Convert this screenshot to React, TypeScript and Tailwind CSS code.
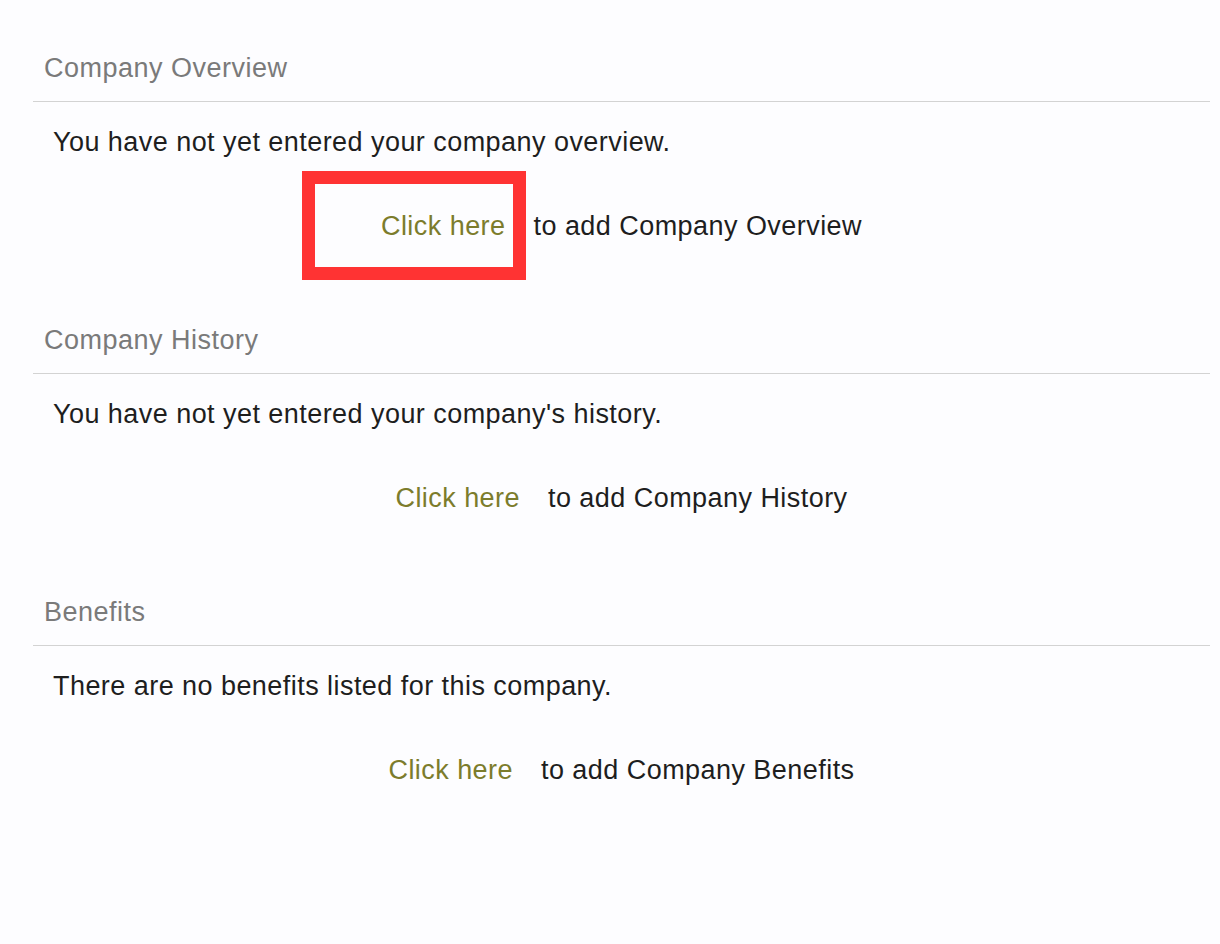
import React from "react";

function Section({
  title,
  message,
  what,
  highlight,
}: {
  title: string;
  message: string;
  what: string;
  highlight?: boolean;
}) {
  return (
    <section className="flex flex-col">
      <h2 className="border-b border-[#d3d3d3] pb-[15px] pl-[11px] text-[27px] leading-[36px] font-normal text-[#7a7a7a] tracking-[0.5px]">
        {title}
      </h2>
      <p className="mt-[22px] pl-[20px] text-[27px] leading-[36px] text-[#1e1e1e] tracking-[0.45px]">
        {message}
      </p>
      <div className="mt-[48px] flex justify-center text-[27px] leading-[36px] tracking-[0.45px]">
        <span className="relative mr-[28px] text-[#7c7c2c]">
          Click here
          {highlight && (
            <span className="pointer-events-none absolute left-[-79px] right-[-20px] top-[-37px] bottom-[-36px] border-[13px] border-[#ff3333]" />
          )}
        </span>
        <span className="text-[#1e1e1e]">to add {what}</span>
      </div>
    </section>
  );
}

export default function App() {
  return (
    <div
      className="min-h-[944px] w-[1220px] bg-[#fdfdff] pt-[50px] pl-[33px] pr-[10px]"
      style={{ fontFamily: '"Liberation Sans", Arial, sans-serif' }}
    >
      <div className="flex flex-col gap-[78px]">
        <Section
          title="Company Overview"
          message="You have not yet entered your company overview."
          what="Company Overview"
          highlight
        />
        <Section
          title="Company History"
          message="You have not yet entered your company's history."
          what="Company History"
        />
        <Section
          title="Benefits"
          message="There are no benefits listed for this company."
          what="Company Benefits"
        />
      </div>
    </div>
  );
}
